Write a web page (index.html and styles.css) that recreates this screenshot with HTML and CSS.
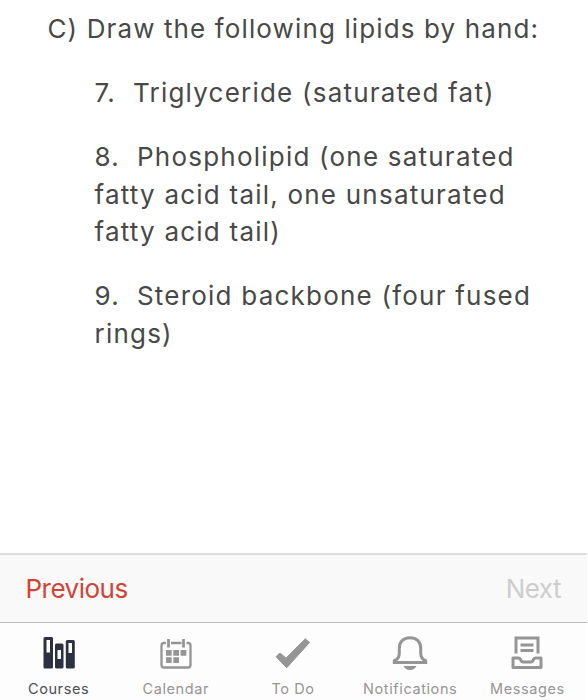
FILE: index.html
```html
<!DOCTYPE html>
<html>
<head>
	<meta charset="utf-8">
	<title>Courses</title>
	<link rel="stylesheet" href="styles.css">
</head>
<body>
	<main class="content">
		<p>C) Draw the following lipids by hand:</p>
		<div class="questions">
			<p>7.&nbsp; Triglyceride (saturated fat)</p>
			<p>8.&nbsp; Phospholipid (one saturated<br>fatty acid tail, one unsaturated<br>fatty acid tail)</p>
			<p>9.&nbsp; Steroid backbone (four fused<br>rings)</p>
		</div>
	</main>

	<div class="pager">
		<span class="previous">Previous</span>
		<span class="next">Next</span>
	</div>

	<nav class="tab-bar">
		<div class="tab active">
			<svg viewBox="0 0 36 36">
				<path fill="currentColor" fill-rule="evenodd" d="M4 2h6.500q1.500 0 1.500 1.500v28.500q0 1.500-1.500 1.500H4q-1.500 0-1.500-1.500V3.500Q2.500 2 4 2zM5.500 5v12.500h3.500V5zM15.500 8.500h5.500q1.500 0 1.500 1.500v22q0 1.500-1.500 1.500h-5.500q-1.500 0-1.500-1.500V10q0-1.500 1.500-1.500zM16.500 15v9h3.500v-9zM26.300 5h6q1.500 0 1.500 1.500V32q0 1.500-1.500 1.500h-6q-1.500 0-1.500-1.500V6.500q0-1.500 1.500-1.500zM27.500 8v10h3.500V8z"/>
			</svg>
			<span>Courses</span>
		</div>
		<div class="tab">
			<svg viewBox="0 0 36 36">
				<path fill="none" stroke="currentColor" stroke-width="2.300" d="M8 8H6q-2.500 0-2.500 2.500V30q0 2.500 2.500 2.500h24q2.500 0 2.500-2.500V10.500Q32.500 8 30 8h-1.500M13 8h10.500"/>
				<path fill="none" stroke="currentColor" stroke-width="2.800" d="M10.500 4v8.500M25.500 4v8.500"/>
				<path fill="currentColor" d="M8 15h5.700v5.700H8zM15.300 15h5.700v5.700h-5.700zM22.600 15h5.700v5.700h-5.700zM8 22.300h5.700V28H8zM15.300 22.300h5.700V28h-5.700z"/>
			</svg>
			<span>Calendar</span>
		</div>
		<div class="tab">
			<svg viewBox="0 0 36 36">
				<path fill="currentColor" stroke="currentColor" stroke-linejoin="round" d="M1 21.700l4-3.700 6 5.200L30.300 3.800l4.200 3.700L11.700 32.800z"/>
			</svg>
			<span>To Do</span>
		</div>
		<div class="tab">
			<svg viewBox="0 0 36 36">
				<path fill="none" stroke="currentColor" stroke-width="3" d="M2.300 27.500h31.400v-1.800c-3.500-1.300-5-4-5-7.500v-5.500C28.700 6.500 24 2.800 18 2.800S7.300 6.500 7.300 12.700v5.500c0 3.500-1.500 6.200-5 7.500z"/>
				<path fill="currentColor" d="M11.500 31h13q-2 4-6.500 4t-6.500-4z"/>
			</svg>
			<span>Notifications</span>
		</div>
		<div class="tab">
			<svg viewBox="0 0 36 36">
				<path fill="none" stroke="currentColor" stroke-width="3" d="M7 18.500V3h22v15.500M11.500 10h13M11.500 15.500h13"/>
				<path fill="none" stroke="currentColor" stroke-width="3" stroke-linejoin="round" d="M4 23h5.500q1.500 0 2 1.500.5 2.500 3 2.500h7q2.500 0 3-2.500.5-1.500 2-1.500H32v9.500H4z"/>
			</svg>
			<span>Messages</span>
		</div>
	</nav>
</body>
</html>
```
FILE: styles.css
```css
body{
	margin: 0;
	width: 587px;
	height: 700px;
	display: flex;
	flex-direction: column;
	overflow: hidden;
	background-color: white;
	font-family: Inter, "Liberation Sans", sans-serif;
}

.content{
	flex: 1;
	padding: 10px 0 0 47.5px;
	color: #484848;
	font-size: 26px;
	line-height: 37.5px;
	letter-spacing: 1.12px;
	white-space: nowrap;
}
.content p{
	margin: 0 0 26.6px;
}
.questions{
	padding-left: 47px;
	letter-spacing: 1.22px;
}

.pager{
	box-sizing: border-box;
	height: 70px;
	padding: 0 26px 0 25.5px;
	display: flex;
	justify-content: space-between;
	align-items: center;
	background-color: #f9f9f9;
	border-top: 2px solid #dedede;
	border-bottom: 1px solid #bdbdbd;
	font-size: 26px;
	letter-spacing: -0.5px;
}
.previous{
	color: #d04338;
}
.next{
	color: #cdcdcd;
}

.tab-bar{
	box-sizing: border-box;
	width: 586px;
	height: 77px;
	padding-top: 12px;
	display: grid;
	grid-template-columns: repeat(5, 1fr);
	background-color: #fdfdfd;
}
.tab{
	display: flex;
	flex-direction: column;
	align-items: center;
	color: #959595;
	font-size: 14.5px;
	line-height: 18px;
	letter-spacing: 0.6px;
}
.tab svg{
	width: 36px;
	height: 36px;
	margin-bottom: 9px;
}
.active{
	color: #4b4c52;
}
.active svg{
	color: #2d3040;
}
```
